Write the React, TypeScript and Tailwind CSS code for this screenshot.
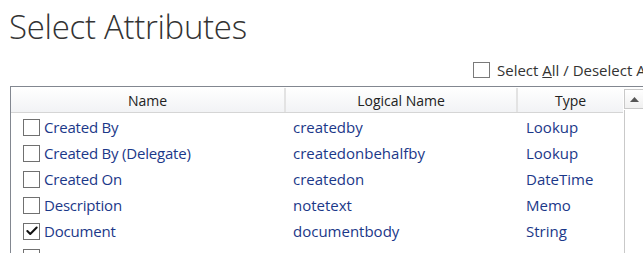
import { Check } from 'lucide-react';

const rows = [
  { name: 'Created By', logical: 'createdby', type: 'Lookup', checked: false },
  { name: 'Created By (Delegate)', logical: 'createdonbehalfby', type: 'Lookup', checked: false },
  { name: 'Created On', logical: 'createdon', type: 'DateTime', checked: false },
  { name: 'Description', logical: 'notetext', type: 'Memo', checked: false },
  { name: 'Document', logical: 'documentbody', type: 'String', checked: true },
  { name: '', logical: 'next', type: '', checked: false },
];

const Box = ({ checked }: { checked: boolean }) => (
  <span className="flex h-[17px] w-[17px] shrink-0 items-center justify-center border border-[#707070] bg-white">
    {checked && <Check className="h-[14px] w-[14px] text-[#111]" strokeWidth={3.5} />}
  </span>
);

const App = () => {
  return (
    <div
      className="relative h-[253px] w-[643px] overflow-hidden bg-white text-[#222]"
      style={{ fontFamily: '"Open Sans", "Noto Sans", sans-serif' }}
    >
      <h1 className="pl-[9px] pt-[5px] text-[33px] font-light leading-[44px] text-[#333] tracking-[-0.3px]">
        Select Attributes
      </h1>

      {/* select all */}
      <div className="mt-[13px] flex items-center gap-[7px] whitespace-nowrap pl-[473px] text-[15px] leading-[16px] text-[#333]">
        <span className="h-[16px] w-[17px] shrink-0 border border-[#7a7a7a] bg-white" />
        <span>
          Select <span className="underline">A</span>ll / Deselect All
        </span>
      </div>

      {/* grid */}
      <div className="ml-[10px] mt-[8px] flex w-[700px] border border-[#828790] bg-white">
        <div className="w-[612px] shrink-0">
          <div className="flex h-[26px] border-b border-[#d5d5d5] bg-gradient-to-b from-white to-[#f2f3f5] pt-[1px] text-[14px] text-[#222]">
            <div className="flex w-[275px] items-center justify-center border-r-2 border-[#e3e3e3]">Name</div>
            <div className="flex w-[232px] items-center justify-center border-r-2 border-[#e3e3e3]">Logical Name</div>
            <div className="flex flex-1 items-center justify-center">Type</div>
          </div>
          <div className="pt-[1px] text-[15px] text-[#1b3889]">
            {rows.map((r) => (
              <div key={r.logical} className="flex h-[26px] items-center">
                <div className="flex w-[275px] items-center gap-[4px] pl-[12px]">
                  <Box checked={r.checked} />
                  <span className="tracking-[-0.2px]">{r.name}</span>
                </div>
                <div className="w-[232px] pl-[7px]">{r.type && r.logical}</div>
                <div className="flex-1 pl-[8px]">{r.type}</div>
              </div>
            ))}
          </div>
        </div>
        <div className="ml-[1px] flex flex-1 flex-col pt-[2px]">
          <div className="flex h-[20px] w-[20px] items-center justify-center border border-[#c9c9c9] bg-gradient-to-b from-white to-[#f0f0f0]">
            <svg width="9" height="5" viewBox="0 0 9 5">
              <path d="M0 5 L4.5 0 L9 5 Z" fill="#555" />
            </svg>
          </div>
          <div className="mt-[1px] h-[200px] w-[20px] border-l border-[#c9c9c9]" />
        </div>
      </div>
    </div>
  );
};

export default App;
